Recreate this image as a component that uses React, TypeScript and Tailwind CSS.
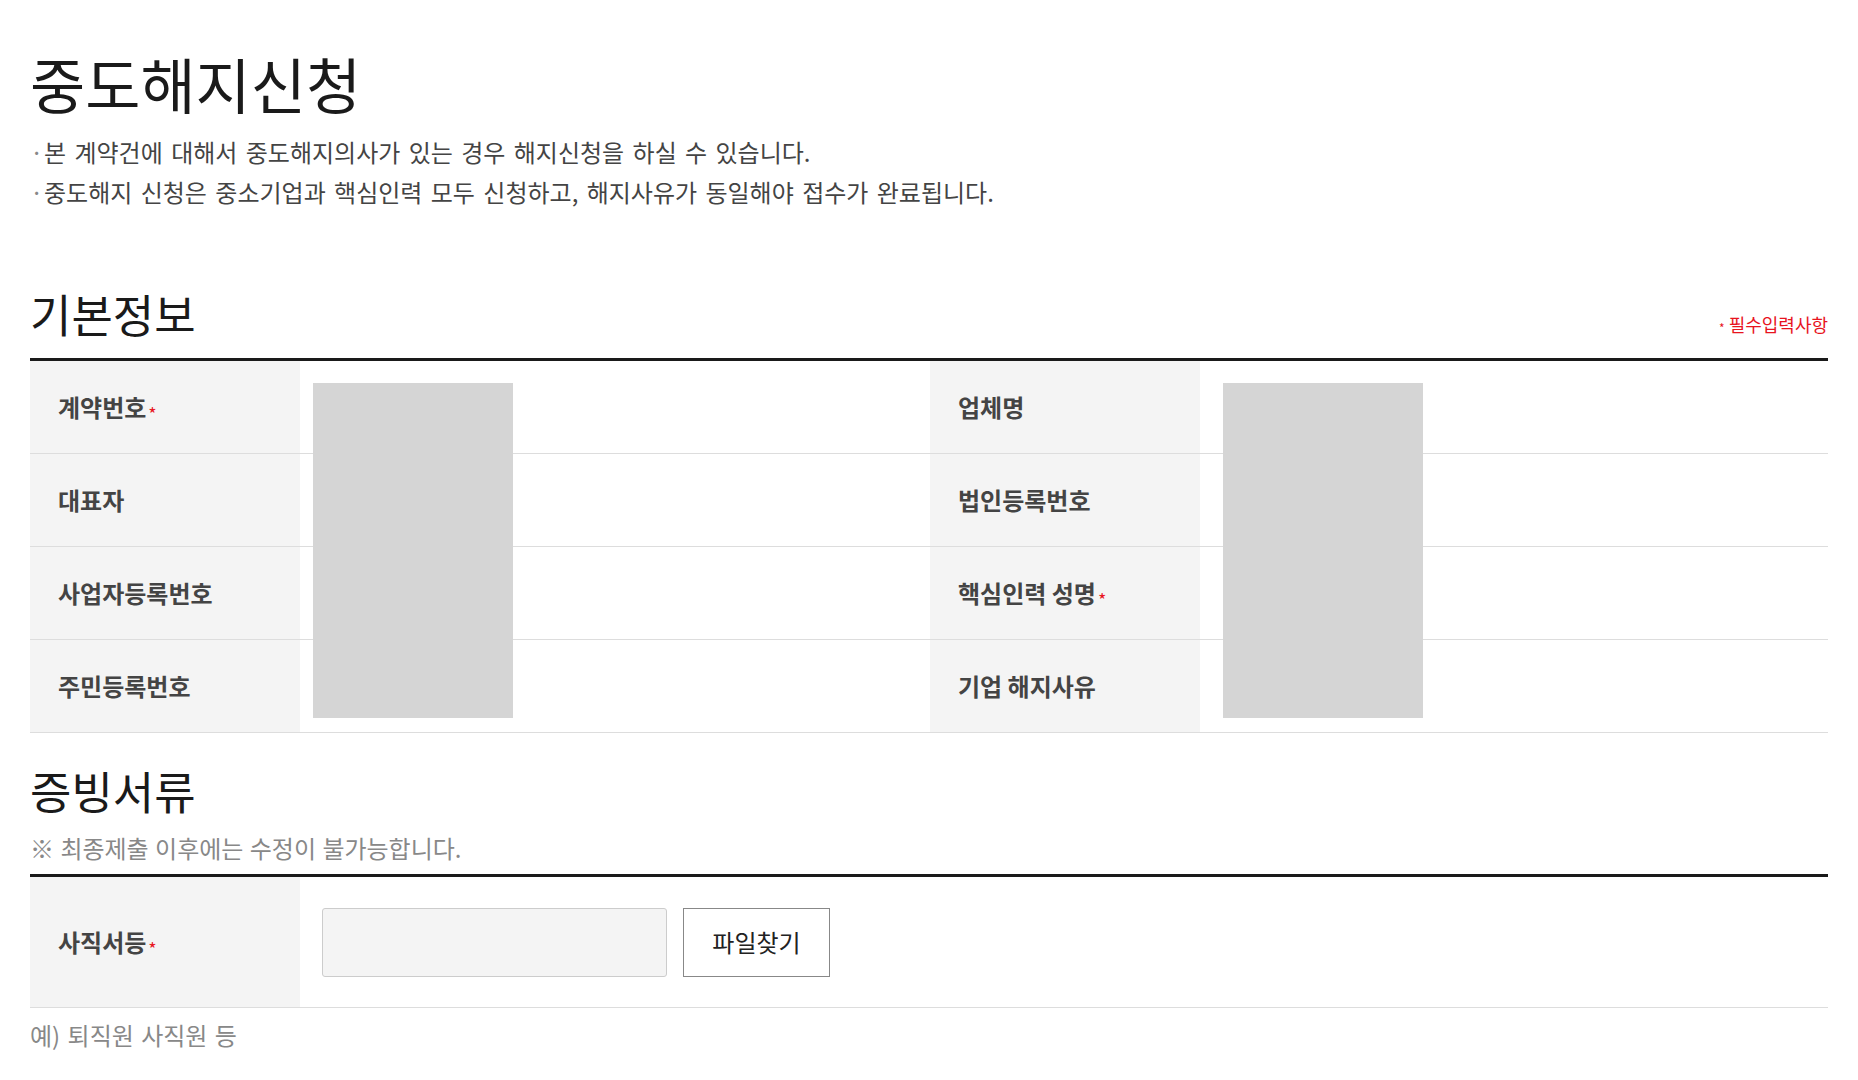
import React from "react";

const FONT = { fontFamily: '"Noto Sans CJK KR", "Noto Sans", sans-serif' };

function Req() {
  return <span className="ml-[2px] text-[18px] leading-none font-normal text-[#e8141e] relative top-[6px]">*</span>;
}

function Label({ children, req }: { children: React.ReactNode; req?: boolean }) {
  return (
    <div className="h-[93px] border-b border-[#dddddd] bg-[#f4f4f4] pl-[28px] flex items-center text-[24px] font-bold text-[#444444]">
      <span>{children}</span>
      {req && <Req />}
    </div>
  );
}

function Value({ box, left }: { box?: boolean; left?: string }) {
  return (
    <div className="h-[93px] border-b border-[#dddddd] relative">
      {box && <div className={`absolute ${left} top-[22px] w-[200px] h-[335px] bg-[#d5d5d5] z-10`} />}
    </div>
  );
}

export default function App() {
  return (
    <div style={FONT} className="w-[1858px] min-h-[1080px] bg-white px-[30px] text-[#222222]">
      <h1 className="pt-[50px] text-[60px] leading-[66px] font-normal text-[#1a1a1a]">중도해지신청</h1>
      <ul className="mt-[16px] text-[24px] leading-[40px] text-[#444444] [word-spacing:3px]">
        <li className="flex">
          <span className="w-[14px] text-[#888888]">·</span>
          <span>본 계약건에 대해서 중도해지의사가 있는 경우 해지신청을 하실 수 있습니다.</span>
        </li>
        <li className="flex">
          <span className="w-[14px] text-[#888888]">·</span>
          <span>중도해지 신청은 중소기업과 핵심인력 모두 신청하고, 해지사유가 동일해야 접수가 완료됩니다.</span>
        </li>
      </ul>

      <div className="mt-[77px] pb-[19px] flex items-end justify-between">
        <h2 className="text-[45px] leading-[50px] font-normal text-[#1a1a1a]">기본정보</h2>
        <span className="text-[18px] leading-[24px] text-[#e8141e]">
          <span className="text-[12px] relative top-[1px] mr-[4px]">*</span>필수입력사항
        </span>
      </div>

      <div className="border-t-[3px] border-[#1a1a1a] grid grid-cols-[270px_630px_270px_1fr]">
        <Label req>계약번호</Label>
        <Value box left="left-[13px]" />
        <Label>업체명</Label>
        <Value box left="left-[23px]" />

        <Label>대표자</Label>
        <Value />
        <Label>법인등록번호</Label>
        <Value />

        <Label>사업자등록번호</Label>
        <Value />
        <Label req>핵심인력 성명</Label>
        <Value />

        <Label>주민등록번호</Label>
        <Value />
        <Label>기업 해지사유</Label>
        <Value />
      </div>

      <h2 className="mt-[33px] text-[45px] leading-[50px] font-normal text-[#1a1a1a]">증빙서류</h2>
      <p className="mt-[17px] text-[24px] leading-[30px] text-[#888888] [word-spacing:1px]">※ 최종제출 이후에는 수정이 불가능합니다.</p>

      <div className="mt-[11px] border-t-[3px] border-[#1a1a1a] border-b border-b-[#dddddd] flex h-[134px]">
        <div className="w-[270px] bg-[#f4f4f4] pl-[28px] flex items-center text-[24px] font-bold text-[#444444]">
          <span>사직서등</span>
          <Req />
        </div>
        <div className="flex items-center pl-[22px] gap-[16px]">
          <div className="w-[345px] h-[69px] rounded-[3px] border border-[#cccccc] bg-[#f4f4f4]" />
          <button className="w-[147px] h-[69px] border border-[#888888] bg-white text-[24px] text-[#222222]">파일찾기</button>
        </div>
      </div>

      <p className="mt-[12px] text-[24px] leading-[30px] text-[#888888] [word-spacing:2px]">예) 퇴직원 사직원 등</p>
    </div>
  );
}
